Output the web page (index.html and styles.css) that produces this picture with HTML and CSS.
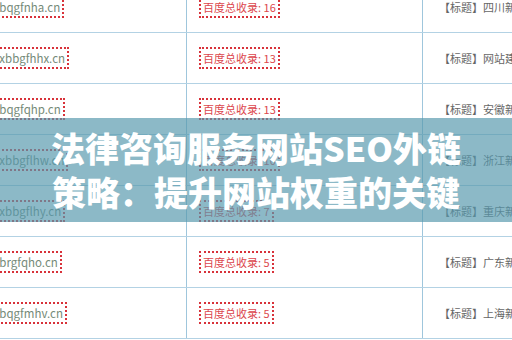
FILE: index.html
```html
<!DOCTYPE html>
<html lang="zh-CN">
<head>
<meta charset="utf-8">
<title>法律咨询服务网站SEO外链策略</title>
<link rel="stylesheet" href="styles.css">
</head>
<body>
<div class="page">
  <div class="table">
    <div class="row">
      <div class="cell c1"><span class="domain">www.bqgfnha.cn</span></div>
      <div class="cell c2"><span class="count">百度总收录: 16</span></div>
      <div class="cell c3"><span class="title">【标题】四川新闻网站</span></div>
    </div>
    <div class="row">
      <div class="cell c1"><span class="domain">www.xbbgfhhx.cn</span></div>
      <div class="cell c2"><span class="count">百度总收录: 13</span></div>
      <div class="cell c3"><span class="title">【标题】网站建设</span></div>
    </div>
    <div class="row">
      <div class="cell c1"><span class="domain">www.bqgfqhp.cn</span></div>
      <div class="cell c2"><span class="count">百度总收录: 13</span></div>
      <div class="cell c3"><span class="title">【标题】安徽新闻网站</span></div>
    </div>
    <div class="row">
      <div class="cell c1"><span class="domain">www.xbbgflhw.cn</span></div>
      <div class="cell c2"><span class="count">百度总收录: 10</span></div>
      <div class="cell c3"><span class="title">【标题】浙江新闻网站</span></div>
    </div>
    <div class="row">
      <div class="cell c1"><span class="domain">www.xbbgflhy.cn</span></div>
      <div class="cell c2"><span class="count">百度总收录: 7</span></div>
      <div class="cell c3"><span class="title">【标题】重庆新闻网站</span></div>
    </div>
    <div class="row">
      <div class="cell c1"><span class="domain">www.brgfqho.cn</span></div>
      <div class="cell c2"><span class="count">百度总收录: 5</span></div>
      <div class="cell c3"><span class="title">【标题】广东新闻网站</span></div>
    </div>
    <div class="row">
      <div class="cell c1"><span class="domain">www.bqgfmhv.cn</span></div>
      <div class="cell c2"><span class="count">百度总收录: 5</span></div>
      <div class="cell c3"><span class="title">【标题】上海新闻网站</span></div>
    </div>
  </div>
  <div class="banner">
    <h1 class="headline">法律咨询服务网站SEO外链<br>策略：提升网站权重的关键</h1>
  </div>
</div>
</body>
</html>
```

FILE: styles.css
```css
html, body {
  margin: 0;
  padding: 0;
  background: #ffffff;
}

.page {
  position: relative;
  width: 512px;
  height: 340px;
  overflow: hidden;
  font-family: "Noto Sans CJK SC", "Noto Sans", sans-serif;
}

.table {
  display: flex;
  flex-direction: column;
  margin-top: -18px;
  margin-left: -41px;
  width: 620px;
}

.row {
  display: grid;
  grid-template-columns: 228px 236px 1fr;
  height: 50px;
  border-bottom: 1px solid #b3d2e4;
}

.cell {
  display: flex;
  align-items: center;
  font-size: 11px;
  white-space: nowrap;
}

.c1 {
  padding-left: 6px;
  border-right: 1px solid #9fc6dc;
}

.c2 {
  padding-left: 12px;
  border-right: 1px solid #9fc6dc;
}

.c3 {
  padding-left: 16px;
}

.domain {
  border: 2px dotted #d8323a;
  padding: 2px 2px;
  color: #758a78;
  line-height: 14px;
  font-size: 11.5px;
}

.count {
  border: 2px dotted #d8323a;
  padding: 2px 2px;
  color: #dc474d;
  line-height: 14px;
}

.title {
  color: #666666;
  line-height: 14px;
}

.banner {
  position: absolute;
  left: 0;
  top: 118px;
  width: 512px;
  height: 104px;
  background: rgba(86, 152, 172, 0.68);
  display: flex;
  align-items: center;
  justify-content: center;
}

.headline {
  margin: 0;
  color: #ffffff;
  font-size: 34px;
  font-weight: 900;
  line-height: 44px;
  text-align: center;
  font-family: "Noto Sans CJK SC", "Noto Sans", sans-serif;
}
```
